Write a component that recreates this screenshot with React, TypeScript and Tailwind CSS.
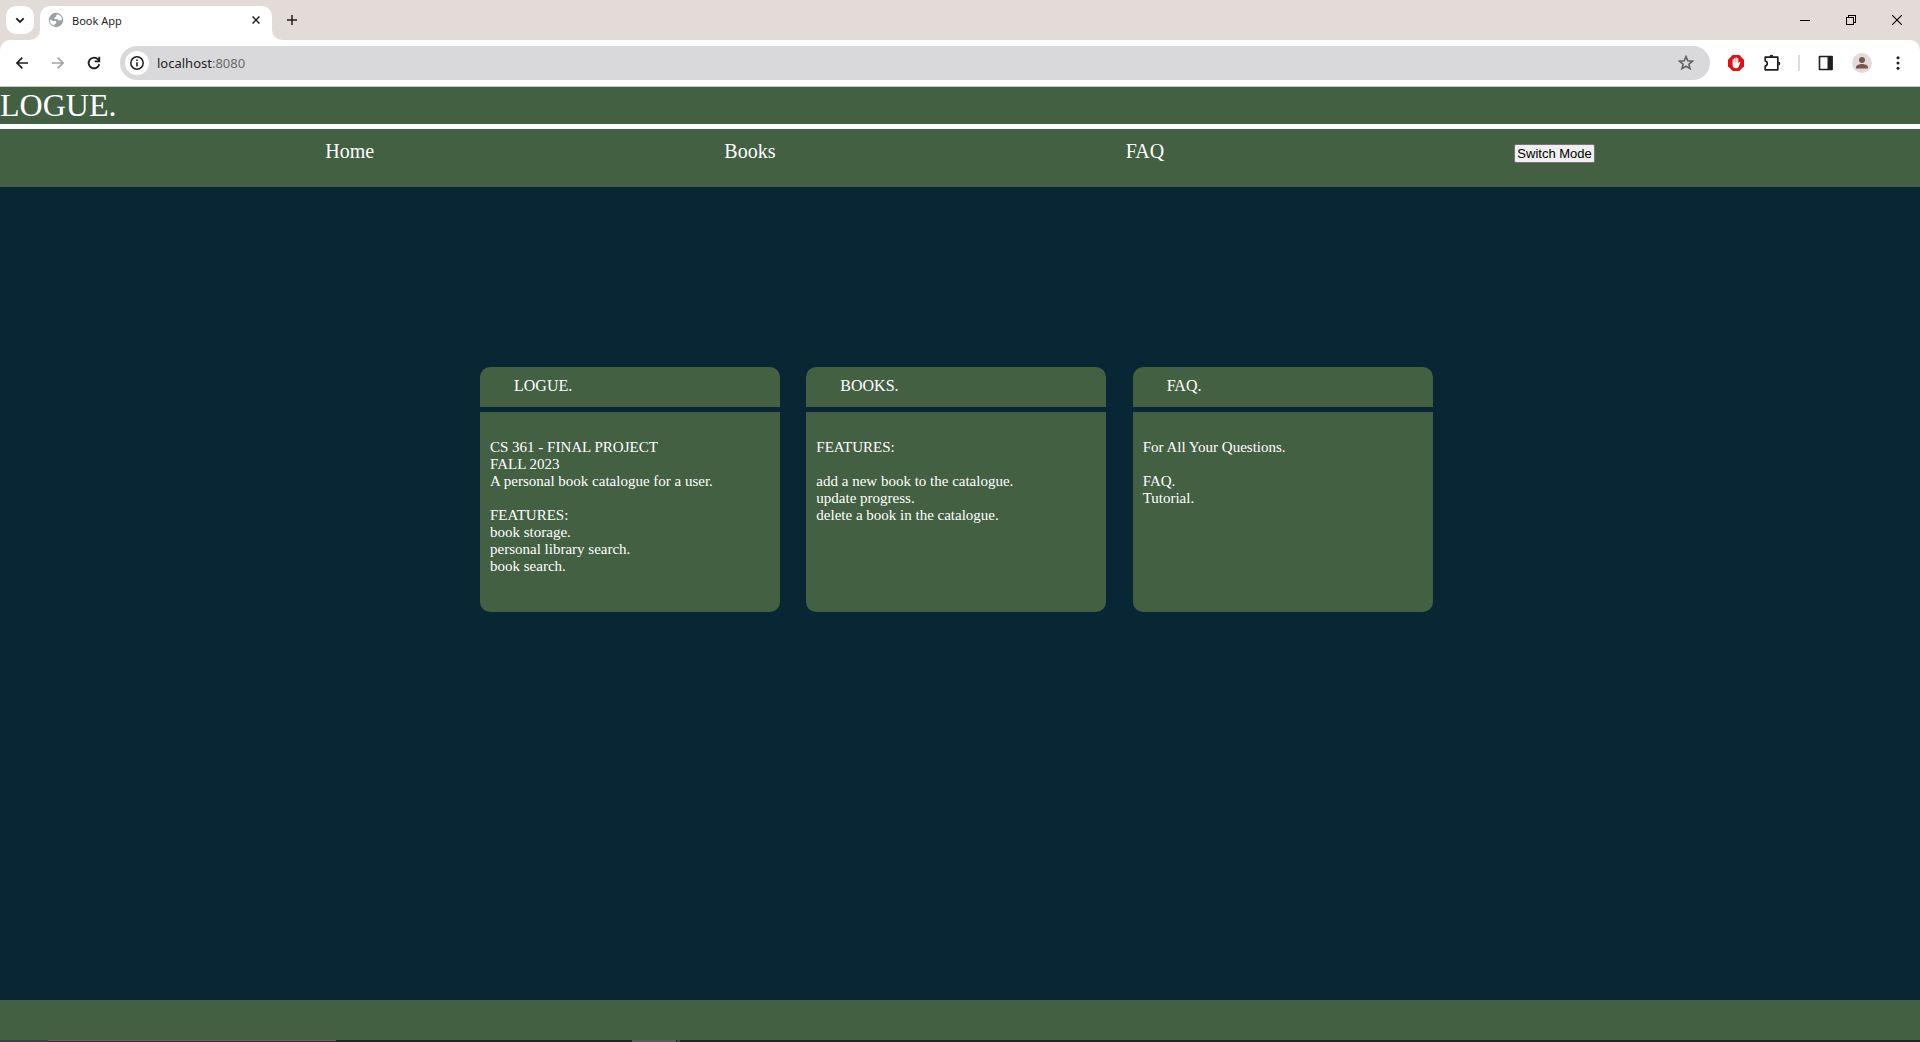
import type { ReactNode } from "react";

const cards = [
  {
    title: "LOGUE.",
    lines: [
      "CS 361 - FINAL PROJECT",
      "FALL 2023",
      "A personal book catalogue for a user.",
      "",
      "FEATURES:",
      "book storage.",
      "personal library search.",
      "book search.",
    ],
  },
  {
    title: "BOOKS.",
    lines: [
      "FEATURES:",
      "",
      "add a new book to the catalogue.",
      "update progress.",
      "delete a book in the catalogue.",
    ],
  },
  {
    title: "FAQ.",
    lines: ["For All Your Questions.", "", "FAQ.", "Tutorial."],
  },
];

function IconButton({ label, className, children }: { label: string; className: string; children: ReactNode }) {
  return (
    <button type="button" aria-label={label} className={`flex shrink-0 items-center justify-center ${className}`}>
      {children}
    </button>
  );
}

function TabStrip() {
  return (
    <div className="flex h-10 items-start bg-[#e3dbd8] pl-1.5">
      <IconButton label="Search tabs" className="mt-1.5 size-7 rounded-[10px] bg-white">
        <svg width="10" height="7" viewBox="0 0 10 7" fill="none" stroke="#1f1f1f" strokeWidth="1.800">
          <path d="M1.300 1.300 5 5 8.700 1.300" />
        </svg>
      </IconButton>
      <div className="relative ml-1.5 mt-1.5 flex h-[34px] w-[232px] items-start rounded-t-[10px] bg-white px-2">
        <svg className="absolute -left-2.5 bottom-0" width="10" height="10" viewBox="0 0 10 10" fill="#fff">
          <path d="M10 0v10H0A10 10 0 0 0 10 0Z" />
        </svg>
        <svg className="absolute -right-2.5 bottom-0" width="10" height="10" viewBox="0 0 10 10" fill="#fff">
          <path d="M0 0v10h10A10 10 0 0 1 0 0Z" />
        </svg>
        <svg className="mt-1.5 shrink-0" width="16" height="16" viewBox="0 0 16 16">
          <circle cx="8" cy="8" r="7.200" fill="#9aa0a6" />
          <path
            d="M9.300 2.300 8.200 3.400v1.200l-1.700 1v1.600h3.200l1.200 1.300 3-.6a6 6 0 0 0-4.600-5.600ZM2 7.300l3.200 1.600h2.300l1 1-.8 1.800-1.200.4v1.700A6 6 0 0 1 2 7.300Z"
            fill="#fff"
          />
        </svg>
        <span className="ml-2 mt-1.5 flex-1 text-[11px] leading-[18px] text-[#1f1f1f]">Book App</span>
        <IconButton label="Close tab" className="mt-1.5 size-4">
          <svg width="8" height="8" viewBox="0 0 8 8" stroke="#1f1f1f" strokeWidth="1.500">
            <path d="m.5.5 7 7M7.500.5l-7 7" />
          </svg>
        </IconButton>
      </div>
      <IconButton label="New tab" className="ml-1.5 mt-1.5 size-7">
        <svg width="10" height="10" viewBox="0 0 10 10" stroke="#1f1f1f" strokeWidth="1.500">
          <path d="M5 0v10M0 5h10" />
        </svg>
      </IconButton>
      <div className="ml-auto flex h-10 items-center">
        <IconButton label="Minimize" className="h-10 w-[46px]">
          <svg width="10" height="10" viewBox="0 0 10 10" stroke="#000" shapeRendering="crispEdges">
            <path d="M0 5.500h10" />
          </svg>
        </IconButton>
        <IconButton label="Restore" className="h-10 w-[46px]">
          <svg width="10" height="10" viewBox="0 0 10 10" fill="none" stroke="#000" shapeRendering="crispEdges">
            <path d="M.5 2.500h7v7h-7ZM2.500 2.500v-2h7v7h-2" />
          </svg>
        </IconButton>
        <IconButton label="Close window" className="h-10 w-[46px]">
          <svg width="10" height="10" viewBox="0 0 10 10" stroke="#000" strokeWidth="1.100">
            <path d="m0 0 10 10M10 0 0 10" />
          </svg>
        </IconButton>
      </div>
    </div>
  );
}

function Toolbar() {
  return (
    <div className="bg-[#e3dbd8]">
      <div className="flex h-[47px] items-center rounded-t-[10px] border-b border-[#c9c9c9] bg-white pl-1.5 pr-2">
        <IconButton label="Back" className="size-8">
          <svg width="12" height="12" viewBox="0 0 12 12" fill="none" stroke="#1f1f1f" strokeWidth="1.700">
            <path d="M12 6H1M6.300.7 1 6l5.300 5.300" />
          </svg>
        </IconButton>
        <IconButton label="Forward" className="ml-1 size-8">
          <svg width="12" height="12" viewBox="0 0 12 12" fill="none" stroke="#a3a3a3" strokeWidth="1.700">
            <path d="M0 6h11M5.700.7 11 6l-5.300 5.300" />
          </svg>
        </IconButton>
        <IconButton label="Reload" className="ml-1 size-8">
          <svg width="14" height="14" viewBox="0 0 14 14" fill="none" stroke="#1f1f1f" strokeWidth="1.800">
            <path d="M12.300 8.200A5.400 5.400 0 1 1 11.200 3.500L12.300 4.700M12.300.7v4.700H7.600" />
          </svg>
        </IconButton>
        <div className="ml-2.5 flex h-[34px] flex-1 items-center rounded-full bg-[#d9d9db] pl-[5px] pr-2">
          <IconButton label="View site information" className="size-6 rounded-full bg-white">
            <svg width="14" height="14" viewBox="0 0 14 14" fill="none" stroke="#1f1f1f">
              <circle cx="7" cy="7" r="6.200" strokeWidth="1.500" />
              <path d="M7 6.200v4.300M7 3.500V5" strokeWidth="1.600" />
            </svg>
          </IconButton>
          <span className="ml-2 flex-1 text-[13px] leading-5 text-[#1f1f1f]">
            localhost<span className="text-[#6b6b6b]">:8080</span>
          </span>
          <IconButton label="Bookmark this tab" className="size-8">
            <svg width="16" height="16" viewBox="0 0 16 16" fill="none" stroke="#5f6062" strokeWidth="1.600">
              <path d="m8 1.600 1.800 4.200 4.600.4-3.500 3 1.100 4.500L8 11.300l-4 2.400 1.100-4.500-3.500-3 4.600-.4Z" />
            </svg>
          </IconButton>
        </div>
        <IconButton label="Content blocker" className="ml-3 size-7">
          <svg width="16" height="16" viewBox="0 0 16 16">
            <path d="M4.700 0h6.600L16 4.700v6.600L11.300 16H4.700L0 11.300V4.700Z" fill="#e60e12" />
            <path
              d="M4.600 8.500V4.700a.6.600 0 0 1 1.200 0v2.800h.3V3.400a.6.600 0 0 1 1.200 0v4h.3V2.900a.6.600 0 0 1 1.200 0v4.500h.3V3.700a.6.600 0 0 1 1.200 0v4.800l.9-1.500c.5-.7 1.300-.3 1.100.4l-1.500 4c-.5 1.200-1.300 1.900-2.900 1.900-2.200 0-3.300-1.300-3.300-3.300Z"
              fill="#fff"
            />
          </svg>
        </IconButton>
        <IconButton label="Extensions" className="ml-2 size-7">
          <svg width="18" height="18" viewBox="0 0 18 18">
            <path
              d="M2.200 3.200H14.800V15.800H2.200V12c2.700-.5 2.700-4.500 0-5Z"
              fill="none"
              stroke="#1f1f1f"
              strokeWidth="1.700"
              strokeLinejoin="round"
            />
            <path d="M6.500 2.700a2 2 0 0 1 4 0ZM15.300 7.500a2 2 0 0 1 0 4Z" fill="#1f1f1f" />
          </svg>
        </IconButton>
        <div className="ml-3 h-4 w-0.5 bg-[#e3dbd8]" />
        <IconButton label="Side panel" className="ml-3 size-7">
          <svg width="16" height="16" viewBox="0 0 16 16">
            <path d="M1.500 1.500h12.500v13H1.500Z" fill="none" stroke="#1f1f1f" strokeWidth="1.600" strokeLinejoin="round" />
            <path d="M9.500 1h5v14h-5Z" fill="#1f1f1f" />
          </svg>
        </IconButton>
        <IconButton label="Profile" className="ml-2 size-7">
          <svg width="20" height="20" viewBox="0 0 20 20">
            <circle cx="10" cy="10" r="10" fill="#e3dbd8" />
            <circle cx="10" cy="7" r="3" fill="#77574d" />
            <path d="M4 15.500v-1.300C4 12.200 7.800 11 10 11s6 1.200 6 3.200v1.300Z" fill="#77574d" />
          </svg>
        </IconButton>
        <IconButton label="Menu" className="ml-2 size-7">
          <svg width="4" height="14" viewBox="0 0 4 14" fill="#1f1f1f">
            <circle cx="2" cy="1.700" r="1.500" />
            <circle cx="2" cy="7" r="1.500" />
            <circle cx="2" cy="12.300" r="1.500" />
          </svg>
        </IconButton>
      </div>
    </div>
  );
}

export default function App() {
  return (
    <div className="flex min-h-screen flex-col bg-[#082633]">
      <div className="font-['Noto_Sans',sans-serif]">
        <TabStrip />
        <Toolbar />
      </div>
      <div className="flex flex-1 flex-col font-['Liberation_Serif',serif] text-white">
        <header className="border-b-5 border-white bg-[#436043]">
          <h1 className="text-[32px] leading-[37px]">LOGUE.</h1>
        </header>
        <nav className="h-[58px] bg-[#436043]">
          <ul className="flex justify-evenly pt-2.5 text-[20px] leading-6">
            {["Home", "Books", "FAQ"].map((item) => (
              <li key={item} className="mx-[25px]">
                <a href="#">{item}</a>
              </li>
            ))}
            <li className="mx-[25px] flex items-center pt-1">
              <button
                type="button"
                className="rounded-[2px] border border-[#767676] bg-[#efefef] px-0.5 font-['Liberation_Sans',sans-serif] text-[13px] leading-[17px] text-black"
              >
                Switch Mode
              </button>
            </li>
          </ul>
        </nav>
        <main className="flex-1 pl-[25%] pt-45">
          <div className="grid w-[979px] grid-cols-3">
            {cards.map((card) => (
              <section key={card.title} className="flex w-[300px] flex-col gap-[5px]">
                <h2 className="h-10 rounded-t-[10px] bg-[#436043] pl-[34px] pt-2.5 text-[16px] leading-[18px]">
                  {card.title}
                </h2>
                <div className="min-h-50 rounded-b-[10px] bg-[#436043] px-2.5 pt-[27px] text-[15px] leading-[17px]">
                  {card.lines.map((line, i) => (
                    <p key={i} className="min-h-[17px]">
                      {line}
                    </p>
                  ))}
                </div>
              </section>
            ))}
          </div>
        </main>
        <footer className="h-10 bg-[#436043]" />
      </div>
      <div className="flex h-0.5 bg-[#1c2628]">
        <div className="w-12 bg-[#3b4048]" />
        <div className="w-72 border-t border-[#6a5f66] bg-[#33262f]" />
        <div className="ml-74 w-11 bg-[#5a5a60]" />
        <div className="ml-px w-[3px] bg-[#45484c]" />
      </div>
    </div>
  );
}
